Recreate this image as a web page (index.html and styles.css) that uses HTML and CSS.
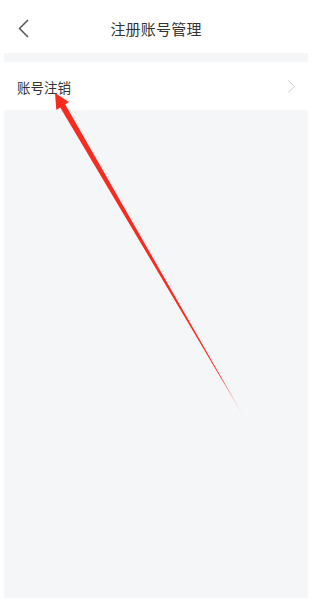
FILE: index.html
```html
<!DOCTYPE html>
<html lang="zh-CN">
<head>
<meta charset="utf-8">
<title>注册账号管理</title>
<link rel="stylesheet" href="styles.css">
</head>
<body>
<div class="screen">
  <header class="nav">
    <div class="nav-left">
      <svg class="back" width="12" height="19" viewBox="0 0 12 19"><polyline points="10,1 1.5,9.5 10,18" fill="none" stroke="#555" stroke-width="1.5"/></svg>
    </div>
    <div class="nav-title">注册账号管理</div>
    <div class="nav-right"></div>
  </header>
  <main class="panel">
    <div class="row">
      <span class="row-label">账号注销</span>
      <svg class="more" width="9" height="13" viewBox="0 0 9 13"><polyline points="1,0.5 7.5,6.5 1,12.5" fill="none" stroke="#cfcfcf" stroke-width="1"/></svg>
    </div>
  </main>
  <svg class="arrow" width="318" height="600" viewBox="0 0 318 600">
    <defs>
      <linearGradient id="fade" gradientUnits="userSpaceOnUse" x1="55" y1="93" x2="244" y2="417">
        <stop offset="0" stop-color="#fb2a1f"/>
        <stop offset="0.88" stop-color="#fb2a1f"/>
        <stop offset="1" stop-color="#fb2a1f" stop-opacity="0.15"/>
      </linearGradient>
    </defs>
    <polygon fill="url(#fade)" points="55,93 69,102 65.2,104.6 244,417 60.2,107.4 56.3,110"/>
  </svg>
</div>
</body>
</html>
```

FILE: styles.css
```css
html, body {
  margin: 0;
  padding: 0;
  background: #ffffff;
}

.screen {
  position: relative;
  width: 318px;
  height: 600px;
  overflow: hidden;
  font-family: "Noto Sans CJK SC", "Noto Sans", sans-serif;
  color: #333333;
}

.nav {
  display: grid;
  grid-template-columns: 1fr auto 1fr;
  align-items: center;
  height: 53px;
  margin: 0 10px 0 4px;
  box-sizing: border-box;
}

.nav-left {
  display: flex;
  align-items: center;
  padding-left: 14px;
  padding-top: 4px;
}

.back {
  display: block;
}

.nav-title {
  font-size: 15px;
  line-height: 20px;
  letter-spacing: 0.2px;
  color: #333333;
  padding-top: 4px;
}

.panel {
  margin: 0 10px 0 4px;
  height: 545px;
  box-sizing: border-box;
  padding-top: 9px;
  background: #f5f6f8;
}

.row {
  display: flex;
  align-items: center;
  justify-content: space-between;
  height: 48px;
  margin-left: -4px;
  padding: 0 12px 0 17px;
  background: #ffffff;
  box-sizing: border-box;
  width: calc(100% + 4px);
}

.row-label {
  font-size: 13.5px;
  line-height: 18px;
  color: #333333;
  padding-top: 1px;
}

.more {
  display: block;
}

.arrow {
  position: absolute;
  left: 0;
  top: 0;
  pointer-events: none;
}
```
